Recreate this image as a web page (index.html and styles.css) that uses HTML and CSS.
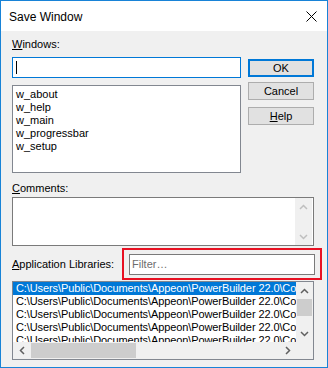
FILE: index.html
```html
<!DOCTYPE html>
<html lang="en">
<head>
    <meta charset="UTF-8">
    <meta name="viewport" content="width=device-width, initial-scale=1.0">
    <title>Save Window</title>
    <link rel="stylesheet" href="styles.css">
</head>
<body>
<div class="window">
    <div class="titlebar">
        <span class="title">Save Window</span>
        <svg class="close" width="11" height="11" viewBox="0 0 11 11">
            <path d="M0.5 0.5 L10.5 10.5 M10.5 0.5 L0.5 10.5" stroke="#000" stroke-width="1" fill="none"/>
        </svg>
    </div>
    <div class="dialog">
        <div class="top">
            <div class="left">
                <label class="lbl"><u>W</u>indows:</label>
                <div class="textbox name"><span class="caret"></span></div>
                <ul class="listbox windows">
                    <li>w_about</li>
                    <li>w_help</li>
                    <li>w_main</li>
                    <li>w_progressbar</li>
                    <li>w_setup</li>
                </ul>
            </div>
            <div class="buttons">
                <button class="btn ok">OK</button>
                <button class="btn cancel">Cancel</button>
                <button class="btn help"><u>H</u>elp</button>
            </div>
        </div>

        <label class="lbl comments-lbl"><u>C</u>omments:</label>
        <div class="textbox comments">
            <div class="vscroll off">
                <div class="arrow"><svg width="9" height="6" viewBox="0 0 9 6"><path d="M1 5 L4.5 1.5 L8 5" stroke="#bfbfbf" stroke-width="1.5" fill="none"/></svg></div>
                <div class="track"></div>
                <div class="arrow"><svg width="9" height="6" viewBox="0 0 9 6"><path d="M1 1 L4.5 4.5 L8 1" stroke="#bfbfbf" stroke-width="1.5" fill="none"/></svg></div>
            </div>
        </div>

        <div class="lib-row">
            <label class="lbl"><u>A</u>pplication Libraries:</label>
            <div class="highlight">
                <div class="textbox filter">Filter…</div>
            </div>
        </div>

        <div class="lib-wrap">
            <div class="libs">
                <div class="libs-main">
                    <ul class="lib-items">
                        <li class="selected">C:\Users\Public\Documents\Appeon\PowerBuilder 22.0\Code Examples</li>
                        <li>C:\Users\Public\Documents\Appeon\PowerBuilder 22.0\Code Examples</li>
                        <li>C:\Users\Public\Documents\Appeon\PowerBuilder 22.0\Code Examples</li>
                        <li>C:\Users\Public\Documents\Appeon\PowerBuilder 22.0\Code Examples</li>
                        <li>C:\Users\Public\Documents\Appeon\PowerBuilder 22.0\Code Examples</li>
                    </ul>
                    <div class="vscroll">
                        <div class="arrow"><svg width="9" height="6" viewBox="0 0 9 6"><path d="M1 5 L4.5 1.5 L8 5" stroke="#606060" stroke-width="1.5" fill="none"/></svg></div>
                        <div class="track"><div class="thumb"></div></div>
                        <div class="arrow"><svg width="9" height="6" viewBox="0 0 9 6"><path d="M1 1 L4.5 4.5 L8 1" stroke="#606060" stroke-width="1.5" fill="none"/></svg></div>
                    </div>
                </div>
                <div class="hscroll-row">
                    <div class="hscroll">
                        <div class="arrow"><svg width="6" height="9" viewBox="0 0 6 9"><path d="M5 1 L1.5 4.5 L5 8" stroke="#606060" stroke-width="1.5" fill="none"/></svg></div>
                        <div class="track"><div class="thumb"></div></div>
                        <div class="arrow"><svg width="6" height="9" viewBox="0 0 6 9"><path d="M1 1 L4.5 4.5 L1 8" stroke="#606060" stroke-width="1.5" fill="none"/></svg></div>
                    </div>
                    <div class="corner"></div>
                </div>
            </div>
            <svg class="grip" width="11" height="11" viewBox="0 0 11 11">
                <rect x="8" y="0" width="2" height="2" fill="#bcbcbc"/>
                <rect x="4" y="4" width="2" height="2" fill="#bcbcbc"/>
                <rect x="8" y="4" width="2" height="2" fill="#bcbcbc"/>
                <rect x="0" y="8" width="2" height="2" fill="#bcbcbc"/>
                <rect x="4" y="8" width="2" height="2" fill="#bcbcbc"/>
                <rect x="8" y="8" width="2" height="2" fill="#bcbcbc"/>
            </svg>
        </div>
    </div>
</div>
</body>
</html>
```

FILE: styles.css
```css
body {
    margin: 0;
    padding: 0;
    font-family: "Liberation Sans", Arial, sans-serif;
    font-size: 11px;
    color: #000;
}

.window {
    width: 328px;
    height: 368px;
    box-sizing: border-box;
    border: 1px solid #1883d7;
    background-color: #f0f0f0;
    display: flex;
    flex-direction: column;
    overflow: hidden;
}

.titlebar {
    height: 30px;
    background-color: #ffffff;
    display: flex;
    align-items: center;
    padding: 0 10px 0 8px;
}

.title {
    font-size: 12px;
    flex: 1;
    padding-top: 1px;
}

.close {
    margin-top: 1px;
}

.dialog {
    flex: 1;
    padding: 7px 13px 0 11px;
}

.lbl {
    display: block;
    line-height: 13px;
    white-space: nowrap;
}

.top {
    display: grid;
    grid-template-columns: 229px 66px;
    column-gap: 7px;
}

.left {
    display: flex;
    flex-direction: column;
}

.textbox {
    box-sizing: border-box;
    background-color: #ffffff;
    border: 1px solid #7a7a7a;
}

.name {
    margin-top: 6px;
    height: 21px;
    border-color: #0078d7;
    padding: 3px 0 0 3px;
}

.caret {
    display: block;
    width: 1px;
    height: 13px;
    background-color: #000;
}

.listbox {
    list-style: none;
    margin: 7px 0 0 0;
    padding: 2px 3px 0 3px;
    height: 88px;
    box-sizing: border-box;
    background-color: #ffffff;
    border: 1px solid #828790;
}

.listbox li {
    line-height: 13px;
}

.buttons {
    display: flex;
    flex-direction: column;
}

.btn {
    font-family: "Liberation Sans", Arial, sans-serif;
    font-size: 11px;
    color: #000;
    height: 18px;
    padding: 0;
    background-color: #e1e1e1;
    border: 1px solid #adadad;
    box-sizing: border-box;
}

.ok {
    margin-top: 21px;
    border: 2px solid #0078d7;
}

.cancel {
    margin-top: 5px;
}

.help {
    margin-top: 7px;
}

.comments-lbl {
    margin-top: 9px;
}

.comments {
    margin-top: 2px;
    height: 49px;
    display: flex;
    justify-content: flex-end;
    padding: 0 1px 0 0;
}

.vscroll {
    width: 17px;
    display: flex;
    flex-direction: column;
    background-color: #f0f0f0;
}

.vscroll .arrow {
    height: 17px;
    display: flex;
    align-items: center;
    justify-content: center;
}

.vscroll .track {
    flex: 1;
}

.vscroll .thumb {
    margin: 0 1px;
    height: 17px;
    background-color: #cdcdcd;
}

.lib-row {
    margin-top: 2px;
    display: flex;
    align-items: center;
    justify-content: space-between;
}

.highlight {
    border: 2px solid #e81123;
    padding: 4px 5px 3px 5px;
    margin-right: -8px;
}

.filter {
    width: 186px;
    height: 21px;
    line-height: 19px;
    padding-left: 2px;
    color: #6d6d6d;
}

.lib-wrap {
    display: flex;
    align-items: flex-end;
}

.libs {
    margin-top: 1px;
    width: 302px;
    height: 79px;
    box-sizing: border-box;
    border: 1px solid #828790;
    background-color: #ffffff;
    display: flex;
    flex-direction: column;
}

.libs-main {
    flex: 1;
    display: flex;
    overflow: hidden;
}

.lib-items {
    list-style: none;
    margin: 0;
    padding: 0;
    flex: 1;
    overflow: hidden;
}

.lib-items li {
    line-height: 13px;
    padding-left: 3px;
    letter-spacing: -0.1px;
    white-space: nowrap;
}

.lib-items .selected {
    background-color: #0078d7;
    color: #ffffff;
}

.hscroll-row {
    height: 17px;
    display: flex;
}

.hscroll {
    flex: 1;
    display: flex;
    background-color: #f0f0f0;
}

.hscroll .arrow {
    width: 17px;
    display: flex;
    align-items: center;
    justify-content: center;
}

.hscroll .track {
    flex: 1;
    padding: 1px 0;
}

.hscroll .thumb {
    margin-left: 1px;
    width: 105px;
    height: 15px;
    background-color: #cdcdcd;
}

.corner {
    width: 17px;
    background-color: #f0f0f0;
}

.grip {
    margin: 0 0 2px 2px;
}
```
